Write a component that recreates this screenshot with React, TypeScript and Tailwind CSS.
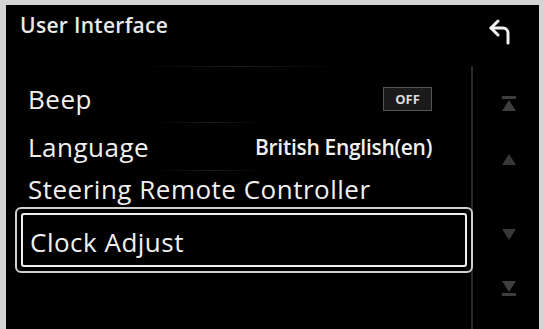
import React from "react";

const font = { fontFamily: '"Open Sans", "Noto Sans", "Liberation Sans", sans-serif' };

function BackIcon() {
  return (
    <svg width="22" height="26" viewBox="0 0 22 26" fill="none" stroke="#f2f2f2" strokeWidth="3" strokeLinecap="round" strokeLinejoin="round">
      <polyline points="9,2 2,9 9,16" />
      <path d="M2 9 H14 A5 5 0 0 1 19 14 V24" />
    </svg>
  );
}

function TopIcon() {
  return (
    <svg width="16" height="16" viewBox="0 0 16 16">
      <rect x="1" y="0" width="14" height="3" fill="#3e3e3e" />
      <polygon points="8,4 15,15 1,15" fill="#3e3e3e" />
    </svg>
  );
}
function UpIcon() {
  return (
    <svg width="16" height="11" viewBox="0 0 16 11">
      <polygon points="8,0 15,11 1,11" fill="#383838" />
    </svg>
  );
}
function DownIcon() {
  return (
    <svg width="16" height="11" viewBox="0 0 16 11">
      <polygon points="1,0 15,0 8,11" fill="#383838" />
    </svg>
  );
}
function BottomIcon() {
  return (
    <svg width="16" height="16" viewBox="0 0 16 16">
      <polygon points="1,1 15,1 8,12" fill="#3e3e3e" />
      <rect x="1" y="13" width="14" height="3" fill="#3e3e3e" />
    </svg>
  );
}

function Sep() {
  return <div className="h-px w-full bg-linear-to-r from-transparent via-[#1c1c1c] to-transparent" />;
}

export default function App() {
  return (
    <div className="w-[543px] h-[329px] bg-[#d4d4d4] pt-[5px] pl-[6px] pr-[4px] overflow-hidden" style={font}>
      <div className="w-[533px] h-[324px] bg-black flex flex-col text-[#f0f0f0]">
        {/* header */}
        <div className="h-[61px] flex justify-between items-start">
          <div className="mt-[9px] pl-[14px] text-[21px] leading-[22px] font-semibold tracking-[0.3px] text-[#e8e8e8]">User Interface</div>
          <div className="mt-[14px] mr-[28px]">
            <BackIcon />
          </div>
        </div>
        {/* body */}
        <div className="flex flex-1">
          <div className="w-[465px] flex flex-col">
            <div className="h-[9px] flex items-start px-[130px]"><Sep /></div>
            <div className="h-[48px] flex items-center justify-between pl-[22px] pr-[39px] relative">
              <span className="text-[26px] leading-[26px] font-medium tracking-[0.5px]">Beep</span>
              <span className="w-[49px] h-[24px] border border-[#555] bg-[#1a1a1a] flex items-center justify-center text-[13px] font-bold text-[#dcdcdc] leading-none">OFF</span>
              <div className="absolute bottom-0 left-[150px] w-[110px]"><Sep /></div>
            </div>
            <div className="h-[48px] flex items-center justify-between pl-[22px] pr-[39px] relative">
              <span className="text-[26px] leading-[26px] font-medium tracking-[0.5px]">Language</span>
              <span className="text-[21px] leading-[21px] font-semibold tracking-[-0.3px]">British English(en)</span>
              <div className="absolute bottom-0 left-[150px] w-[110px]"><Sep /></div>
            </div>
            <div className="h-[36px] flex items-center pl-[22px]">
              <span className="text-[26px] leading-[26px] font-medium tracking-[0.5px]">Steering Remote Controller</span>
            </div>
            <div className="relative z-10 ml-[9px] mr-[-2px] h-[66px] border-2 border-[#cfcfcf] rounded-[6px] p-[4px]">
              <div className="h-full border-2 border-[#f0f0f0] rounded-[3px] flex items-center pl-[7px] pt-[3px]">
                <span className="text-[26px] leading-[26px] font-medium tracking-[0.5px]">Clock Adjust</span>
              </div>
            </div>
          </div>
          <div className="w-[2px] bg-[#2a2a2a]" />
          <div className="flex-1 flex flex-col pl-[28px]">
            <div className="mt-[30px]"><TopIcon /></div>
            <div className="mt-[42px] flex"><UpIcon /></div>
            <div className="mt-[64px] flex"><DownIcon /></div>
            <div className="mt-[40px]"><BottomIcon /></div>
          </div>
        </div>
      </div>
    </div>
  );
}
